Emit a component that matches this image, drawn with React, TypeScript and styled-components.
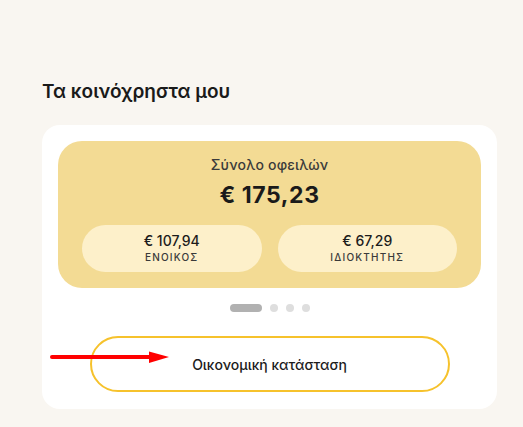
import * as React from 'react';
import styled, { createGlobalStyle } from 'styled-components'

const GlobalStyle = createGlobalStyle`
  html, body {
    margin: 0;
    padding: 0;
    background-color: #f9f6f1;
    font-family: Inter, "Noto Sans", sans-serif;
    color: #1c1c1c;
  }
`

const Page = styled.div`
  position: relative;
  width: 523px;
  height: 427px;
  overflow: hidden;
  padding: 80px 0 0 42px;
  box-sizing: border-box;
`

const Title = styled.h2`
  margin: 0 0 21px;
  font-size: 19px;
  font-weight: 600;
  line-height: 24px;
  color: #1a1a1a;
`

const Track = styled.div`
  display: flex;
  gap: 16px;
`

const Card = styled.div`
  flex: 0 0 455px;
  background-color: #ffffff;
  border-radius: 18px;
  padding: 16px 16px 17px;
  box-sizing: border-box;
  display: flex;
  flex-direction: column;
  align-items: center;
`

const Summary = styled.div`
  width: 100%;
  background-color: #f3db94;
  border-radius: 24px;
  padding: 16px 24px 16px;
  box-sizing: border-box;
  display: flex;
  flex-direction: column;
  align-items: center;
`

const SummaryLabel = styled.div`
  font-size: 14px;
  font-weight: 500;
  color: #3b3b3b;
  line-height: 16px;
  letter-spacing: 0.2px;
`

const SummaryAmount = styled.div`
  margin-top: 8px;
  font-size: 23px;
  font-weight: 700;
  line-height: 28px;
  letter-spacing: 0.6px;
  color: #1a1a1a;
`

const Split = styled.div`
  margin-top: 16px;
  width: 100%;
  display: grid;
  grid-template-columns: 1fr 1fr;
  gap: 16px;
`

const Pill = styled.div`
  height: 47px;
  background-color: #fdf0ca;
  border-radius: 24px;
  display: flex;
  flex-direction: column;
  align-items: center;
  justify-content: center;
  gap: 2px;
`

const PillAmount = styled.div`
  font-size: 14px;
  font-weight: 500;
  line-height: 16px;
  color: #1c1c1c;
`

const PillLabel = styled.div`
  font-size: 10px;
  font-weight: 500;
  letter-spacing: 1.2px;
  line-height: 13px;
  color: #3a3a3a;
`

const Dots = styled.div`
  margin-top: 16px;
  display: flex;
  gap: 8px;
`

const Dot = styled.span<{ $active?: boolean }>`
  display: block;
  width: ${p => (p.$active ? '32px' : '8px')};
  height: 8px;
  border-radius: 4px;
  background-color: ${p => (p.$active ? '#b1b1b1' : '#dedede')};
`

const ActionButton = styled.button`
  margin-top: 24px;
  width: 360px;
  height: 56px;
  border: 2px solid #f6c22c;
  border-radius: 28px;
  background: transparent;
  font-family: inherit;
  font-size: 14px;
  font-weight: 500;
  color: #1c1c1c;
  cursor: pointer;
`

const Arrow = styled.svg`
  position: absolute;
  left: 49px;
  top: 350px;
`

export default function App() {
  return (
    <Page>
      <GlobalStyle />
      <Title>Τα κοινόχρηστα μου</Title>
      <Track>
        <Card>
          <Summary>
            <SummaryLabel>Σύνολο οφειλών</SummaryLabel>
            <SummaryAmount>€ 175,23</SummaryAmount>
            <Split>
              <Pill>
                <PillAmount>€ 107,94</PillAmount>
                <PillLabel>ΕΝΟΙΚΟΣ</PillLabel>
              </Pill>
              <Pill>
                <PillAmount>€ 67,29</PillAmount>
                <PillLabel>ΙΔΙΟΚΤΗΤΗΣ</PillLabel>
              </Pill>
            </Split>
          </Summary>
          <Dots>
            <Dot $active />
            <Dot />
            <Dot />
            <Dot />
          </Dots>
          <ActionButton>Οικονομική κατάσταση</ActionButton>
        </Card>
      </Track>
      <Arrow width="124" height="16" viewBox="0 0 124 16">
        <line x1="3" y1="7" x2="104" y2="7" stroke="#ff0000" strokeWidth="4" strokeLinecap="round" />
        <polygon points="100,1.5 120,7 100,13" fill="#ff0000" />
      </Arrow>
    </Page>
  )
}
